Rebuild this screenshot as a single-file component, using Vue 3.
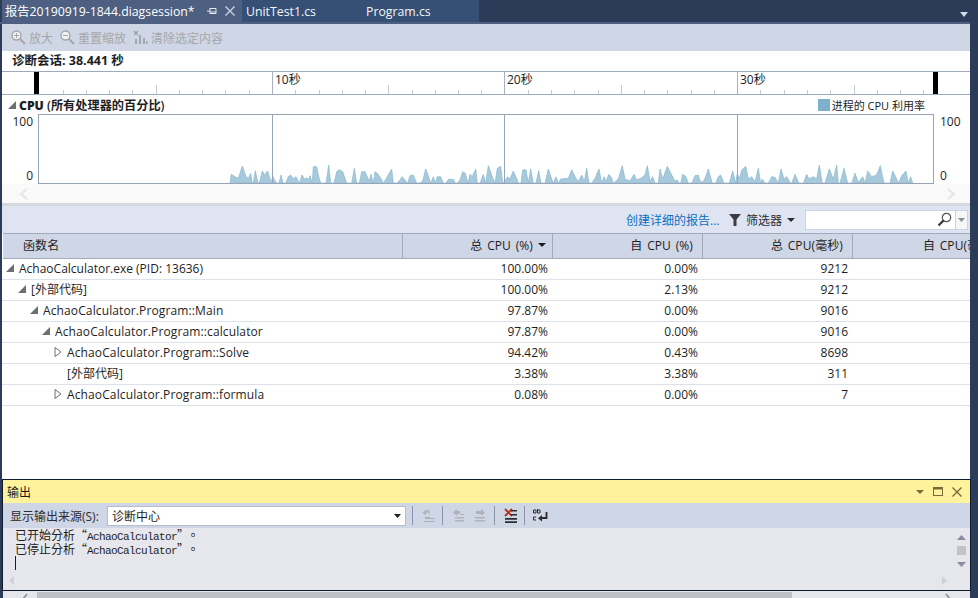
<script setup>
const seg = (off, s) => s.trim().split(/\s+/).map(p => {
  const [x, y] = p.split(',').map(Number)
  return `${(off + x / 3).toFixed(1)},${(155 + y / 3).toFixed(1)}`
}).join(' ')
const a = '30,85 34,58 45,65 55,70 67,33 78,65 85,70 92,55 97,85 100,85 106,47 113,82 118,85 127,48 133,60 143,48 150,72 155,78 158,62 165,78 172,85 177,85 183,60 189,85 197,85 205,65 212,60 220,72 228,65 238,85 246,60 253,72 260,68 265,75 270,62 277,85 280,35 290,35 295,60 302,85 318,85 326,30 332,85 342,85 350,50 358,44 368,50 380,85 395,85 403,40 410,85 418,85 425,50 435,50 447,78 453,58 460,85 465,50 472,55 484,72 490,85 498,72 510,50 515,42 520,85 530,85 537,78 547,65 557,78 563,85 570,62 580,60 590,85 600,85 608,78 617,42 625,62 632,85 640,65 645,85 652,65 662,65 670,85 678,85 685,73 700,73 706,85 712,85'
const b = '0,75 8,50 16,55 24,85 30,58 37,65 47,42 52,85 60,85 70,58 77,85 85,32 95,60 105,85 112,40 122,34 128,85 133,80 143,65 150,72 160,48 172,75 175,85 183,85 188,45 198,44 205,85 212,42 220,85 228,85 236,47 243,85 255,85 265,42 275,72 280,85 288,65 295,85 302,72 325,70 335,44 345,65 355,80 365,60 373,80 380,40 387,85 395,85 405,70 417,42 425,85 432,65 438,78 447,58 455,70 460,85 475,72 487,32 495,72 510,78 522,58 530,75 545,68 555,60 562,32 570,78 578,65 585,85 595,85 600,42 608,72 622,34 635,60 645,78 652,75 658,85 662,85 668,58 678,65 685,85 695,85 705,62 715,60'
const c = '0,78 8,82 15,70 25,42 37,85 47,85 55,65 62,60 72,85 88,85 98,48 107,85 112,55 118,72 125,45 137,34 145,72 155,65 165,80 175,40 182,85 187,72 195,85 205,85 215,65 225,67 235,85 243,42 252,72 260,65 272,85 275,85 285,58 297,85 310,85 320,58 327,72 340,65 350,72 358,30 367,85 375,85 388,42 400,72 410,30 415,85 420,85 432,40 443,85 455,85 465,55 475,82 488,65 495,85 503,48 515,65 525,62 532,55 541,32 552,85 570,85 578,48 590,72 595,85 605,62 618,48 625,85 632,65 638,85'
const chartPoints = `${seg(220, a)} ${seg(460, b)} ${seg(700, c)}`

const ticks = []
for (let i = 1; i < 39; i++) {
  if (i % 10 === 0) continue
  const x = Math.round(39.4 + i * 23.26) + 0.5
  ticks.push({ x, top: i % 5 === 0 ? 14 : 19 })
}
const majors = [272.5, 504.5, 737.5]
const labels = [
  { x: 275, t: '10秒' },
  { x: 507, t: '20秒' },
  { x: 740, t: '30秒' }
]
const rows = [
  { name: 'AchaoCalculator.exe (PID: 13636)', level: 0, icon: 'open', v: ['100.00%', '0.00%', '9212'] },
  { name: '[外部代码]', level: 1, icon: 'open', v: ['100.00%', '2.13%', '9212'] },
  { name: 'AchaoCalculator.Program::Main', level: 2, icon: 'open', v: ['97.87%', '0.00%', '9016'] },
  { name: 'AchaoCalculator.Program::calculator', level: 3, icon: 'open', v: ['97.87%', '0.00%', '9016'] },
  { name: 'AchaoCalculator.Program::Solve', level: 4, icon: 'closed', v: ['94.42%', '0.43%', '8698'] },
  { name: '[外部代码]', level: 4, icon: 'none', v: ['3.38%', '3.38%', '311'] },
  { name: 'AchaoCalculator.Program::formula', level: 4, icon: 'closed', v: ['0.08%', '0.00%', '7'] }
]
</script>

<template>
  <div class="app">
    <div class="tabs">
      <div class="tab active">
        <span class="tab-title">报告20190919-1844.diagsession*</span>
        <svg class="pin" width="10" height="10" viewBox="0 0 10 10"><path d="M0 5h3M3 2v6M3 2.5h6M3 7.5h6M9 2.5v5M3 6h6" fill="none" stroke="#e4e8f0" stroke-width="1"/></svg>
        <svg class="close" width="10" height="10" viewBox="0 0 10 10"><path d="M0.500 0.500l9 9M9.500 0.500l-9 9" stroke="#c9d1e0" stroke-width="1.400"/></svg>
      </div>
      <div class="tab other">UnitTest1.cs</div>
      <div class="tab other">Program.cs</div>
      <div class="tab-fill"></div>
      <svg class="tabs-caret" width="8" height="5" viewBox="0 0 8 5"><path d="M0 0h8L4 5z" fill="#d5dbe8"/></svg>
    </div>
    <div class="tabline"></div>

    <div class="doc">
      <div class="toolbar">
        <svg width="15" height="15" viewBox="0 0 15 15"><circle cx="5.500" cy="5.500" r="4.500" fill="#eef0f4" stroke="#a4a6a8" stroke-width="1.400"/><path d="M9 9l5 5" stroke="#a4a6a8" stroke-width="2"/><path d="M3 5.500h5M5.500 3v5" stroke="#a4a6a8"/></svg>
        <span class="tool-label first">放大</span>
        <svg class="gap-icon" width="15" height="15" viewBox="0 0 15 15"><circle cx="5.500" cy="5.500" r="4.500" fill="#eef0f4" stroke="#a4a6a8" stroke-width="1.400"/><path d="M9 9l5 5" stroke="#a4a6a8" stroke-width="2"/><path d="M3 5.500h5" stroke="#a4a6a8"/></svg>
        <span class="tool-label first">重置缩放</span>
        <svg class="gap-icon" width="15" height="15" viewBox="0 0 15 15"><path d="M1 1l4 4M5 1L1 5" stroke="#9a9c9e" stroke-width="1.200"/><path d="M2 9h2v5H2zM6 5h2v9H6zM10 8h2v6h-2z" fill="#a4a6a8"/><path d="M13 11h1.500v3H13z" fill="#a4a6a8"/></svg>
        <span class="tool-label first">清除选定内容</span>
      </div>

      <div class="session">诊断会话: 38.441 秒</div>

      <svg class="ruler" width="968" height="24" viewBox="2 71 968 24">
        <rect x="2" y="71" width="968" height="1" fill="#a0aabd"/>
        <rect x="2" y="94" width="968" height="1" fill="#a0aabd"/>
        <rect x="34" y="72" width="5" height="22" fill="#000"/>
        <rect x="933" y="72" width="5" height="22" fill="#000"/>
        <path v-for="t in ticks" :key="t.x" :d="`M${t.x} ${71 + t.top}V94`" stroke="#c5cad4" fill="none"/>
        <rect v-for="m in majors" :key="m" :x="m - 0.5" y="72" width="1" height="22" fill="#a8b1c2"/>
        <text v-for="l in labels" :key="l.x" :x="l.x" y="84" class="ruler-label">{{ l.t }}</text>
      </svg>

      <div class="cpu-head">
        <svg width="8" height="8" viewBox="0 0 8 8"><path d="M8 0v8H0z" fill="#6d6f73"/></svg>
        <span class="cpu-title"><b>CPU</b> <b class="semi">(所有处理器的百分比)</b></span>
        <span class="legend"><i class="swatch"></i>进程的 CPU 利用率</span>
      </div>

      <div class="chart-row">
        <div class="axis left"><span>100</span><span>0</span></div>
        <svg class="plot" width="896" height="70" viewBox="38 114 896 70">
          <polygon :points="chartPoints" fill="#a6c9db" stroke="#8ab7ce" stroke-width="0.700"/>
          <path d="M272.500 114V183M504.500 114V183M737.500 114V183" stroke="#97a3b6" fill="none"/>
          <rect x="38.500" y="114.500" width="895" height="69" fill="none" stroke="#97a3b6"/>
        </svg>
        <div class="axis right"><span>100</span><span>0</span></div>
      </div>

      <div class="chart-scroll">
        <svg width="10" height="12" viewBox="0 0 10 12"><path d="M8 1L2 6l6 5" fill="none" stroke="#e8e8e8" stroke-width="2.400"/></svg>
        <svg width="10" height="12" viewBox="0 0 10 12"><path d="M2 1l6 5-6 5" fill="none" stroke="#e8e8e8" stroke-width="2.400"/></svg>
      </div>
      <div class="split"></div>

      <div class="filterbar">
        <a class="link">创建详细的报告...</a>
        <svg class="funnel" width="12" height="12" viewBox="0 0 12 12"><path d="M0 0h12L7.500 5.500V12h-3V5.500z" fill="#3c3c40"/></svg>
        <span class="filter-label">筛选器</span>
        <svg class="caret" width="8" height="4" viewBox="0 0 8 4"><path d="M0 0h8L4 4z" fill="#2d2d30"/></svg>
        <div class="search">
          <span class="search-input"><svg width="15" height="15" viewBox="0 0 15 15"><circle cx="9.500" cy="5.500" r="4.200" fill="none" stroke="#555" stroke-width="1.200"/><path d="M6.500 8.500L1.500 13.500" stroke="#333" stroke-width="2.200"/></svg></span>
          <span class="search-drop"><svg width="7" height="4" viewBox="0 0 7 4"><path d="M0 0h7L3.500 4z" fill="#8a8d94"/></svg></span>
        </div>
      </div>

      <div class="table">
        <div class="thead">
          <div class="th name">函数名</div>
          <div class="th sorted">总 CPU (%)<svg class="sort" width="8" height="4" viewBox="0 0 8 4"><path d="M0 0h8L4 4z" fill="#1e1e1e"/></svg></div>
          <div class="th">自 CPU (%)</div>
          <div class="th">总 CPU(毫秒)</div>
          <div class="th last">自 CPU(毫秒)</div>
        </div>
        <div v-for="(r, i) in rows" :key="i" class="tr">
          <div class="td name" :style="{ paddingLeft: 4 + r.level * 12 + 'px' }">
            <svg class="exp" width="8" height="12" viewBox="0 0 8 12">
              <path v-if="r.icon === 'open'" d="M8 2v8H0z" fill="#6d6f73"/>
              <path v-else-if="r.icon === 'closed'" d="M1 1.500l6 4.500-6 4.500z" fill="none" stroke="#6d6f73"/>
            </svg>
            <span :class="{ method: r.name.includes('::') }">{{ r.name }}</span>
          </div>
          <div v-for="(v, j) in r.v" :key="j" class="td num">{{ v }}</div>
          <div class="td"></div>
        </div>
      </div>
    </div>

    <div class="output">
      <div class="out-title">
        <span>输出</span>
        <span class="out-controls">
          <svg width="8" height="4" viewBox="0 0 8 4"><path d="M0 0h8L4 4z" fill="#7a6a3a"/></svg>
          <svg width="10" height="9" viewBox="0 0 10 9"><rect x="0.500" y="0.500" width="9" height="8" fill="none" stroke="#7a6a3a"/><rect x="0" y="0" width="10" height="2.500" fill="#7a6a3a"/></svg>
          <svg width="10" height="10" viewBox="0 0 10 10"><path d="M0.500 0.500l9 9M9.500 0.500l-9 9" stroke="#7a6a3a" stroke-width="1.400"/></svg>
        </span>
      </div>
      <div class="out-tools">
        <span class="src-label">显示输出来源(S):</span>
        <div class="combo">
          <span>诊断中心</span>
          <svg width="7" height="4" viewBox="0 0 7 4"><path d="M0 0h7L3.500 4z" fill="#1e1e1e"/></svg>
        </div>
        <i class="sep"></i>
        <svg class="ic" width="14" height="15" viewBox="0 0 14 15"><path d="M3 6V3h4v3M1 4l2 2 2-2" fill="none" stroke="#b0b2b8" stroke-width="1.300"/><path d="M3 9h5v2H3zM2 13h11v1H2zM8 10h5v1H8z" fill="#b0b2b8"/></svg>
        <i class="sep s2"></i>
        <svg class="ic" width="13" height="13" viewBox="0 0 13 13"><path d="M5 0L1 3.500 5 7V5h3V2H5zM3 8h9v1.500H3zM3 11h9v1.500H3zM8 5h4v1H8z" fill="#b0b2b8"/></svg>
        <svg class="ic ic4" width="13" height="13" viewBox="0 0 13 13"><path d="M7 0l4 3.500L7 7V5H2V2h5zM1 8h10v1.500H1zM1 11h10v1.500H1z" fill="#b0b2b8"/></svg>
        <i class="sep s3"></i>
        <svg class="ic" width="14" height="15" viewBox="0 0 14 15"><path d="M1 1l7 7M8 1L1 8" stroke="#b5301a" stroke-width="1.800"/><path d="M7 2h6v1.500H7zM7 6h6v1.500H7zM1 10h12v1.800H1zM1 13.200h12V15H1z" fill="#2d2d30"/></svg>
        <i class="sep s4"></i>
        <svg class="ic" width="15" height="14" viewBox="0 0 15 14"><path d="M13.500 3V9H7" fill="none" stroke="#2d2d30" stroke-width="1.800"/><path d="M9 6L5 9.200 9 12.500z" fill="#2d2d30"/><path d="M0.500 1h2.500v3H0.500zM4.500 0v4h2.500V1H4.500M0.500 8h2.500M0.500 8v3h2.500" fill="none" stroke="#2d2d30"/></svg>
      </div>
      <div class="out-body">
        <div class="out-main">
          <div class="out-text">
            <div class="line"><span class="cjk">已开始分析“</span>AchaoCalculator<span class="cjk tail">”。</span></div>
            <div class="line"><span class="cjk">已停止分析“</span>AchaoCalculator<span class="cjk tail">”。</span></div>
            <i class="cursor"></i>
          </div>
          <div class="hscroll">
            <svg width="5" height="9" viewBox="0 0 5 9"><path d="M5 0v9L0 4.500z" fill="#d0d1d8"/></svg>
            <svg width="5" height="9" viewBox="0 0 5 9"><path d="M0 0v9l5-4.500z" fill="#d0d1d8"/></svg>
          </div>
        </div>
        <div class="vscroll">
          <svg width="9" height="5" viewBox="0 0 9 5"><path d="M4.500 0L9 5H0z" fill="#8a8ca0"/></svg>
          <i class="thumb"></i>
          <svg width="9" height="5" viewBox="0 0 9 5"><path d="M0 0h9L4.500 5z" fill="#8a8ca0"/></svg>
        </div>
      </div>
    </div>

    <div class="bottom">
      <svg width="6" height="7" viewBox="0 0 6 7"><path d="M5 1L1 6" fill="none" stroke="#8a8ca0" stroke-width="1.600"/></svg>
      <i class="bottom-thumb"></i>
      <svg class="bottom-next" width="6" height="7" viewBox="0 0 6 7"><path d="M1 1l4 5" fill="none" stroke="#8a8ca0" stroke-width="1.600"/></svg>
    </div>
  </div>
</template>

<style>
html, body { margin: 0; overflow: hidden; }
</style>

<style scoped>
.app {
  width: 978px;
  height: 598px;
  overflow: hidden;
  display: flex;
  flex-direction: column;
  background: #2b3b58;
  color: #1e1e1e;
  font-family: "Open Sans", "Noto Sans CJK SC", sans-serif;
  font-size: 12px;
}
.tabs { height: 22px; display: flex; align-items: stretch; padding-left: 2px; flex: none; }
.tab { display: flex; align-items: center; font-size: 12.300px; }
.tab.active { width: 240px; padding-left: 3px; box-sizing: border-box; background: #4d6082; color: #fff; }
.tab-title { width: 202px; white-space: nowrap; flex: none; overflow: hidden; }
.pin { margin-right: 8px; flex: none; }
.close { flex: none; }
.tab.other { width: 120px; padding-left: 4px; box-sizing: border-box; background: #364f75; color: #f2f5fa; }
.tab.other + .tab.other { width: 117px; }
.tab-fill { flex: 1; }
.tabs-caret { align-self: center; margin-right: 10px; margin-top: 6px; }
.tabline { height: 2px; background: #4d6082; flex: none; margin-right: 8px; }

.doc {
  margin: 0 8px 0 2px;
  height: 455px;
  flex: none;
  background: #fff;
  overflow: hidden;
}
.toolbar {
  height: 27px;
  background: #cfd6e5;
  display: flex;
  align-items: center;
  padding-left: 9px;
  color: #a4a6a8;
}
.tool-label { margin-left: 2px; }
.tool-label.first { margin-left: 3px; }
.gap-icon { margin-left: 7px; }
.session { height: 20px; line-height: 19px; padding-left: 10px; font-weight: 700; font-size: 12.500px; white-space: nowrap; }
.ruler { display: block; }
.ruler-label { font-size: 12px; fill: #1e1e1e; }
.cpu-head { height: 19px; display: flex; align-items: center; padding-left: 6px; padding-right: 45px; }
.cpu-title { margin-left: 3px; font-weight: 700; white-space: nowrap; font-size: 12.200px; }
.semi { font-weight: 600; }
.legend { margin-left: auto; display: flex; align-items: center; white-space: nowrap; font-size: 11px; }
.swatch { width: 12px; height: 12px; background: #7cb0cb; margin-right: 2px; }
.chart-row { display: grid; grid-template-columns: 36px 896px 1fr; height: 70px; }
.plot { display: block; }
.axis { display: flex; flex-direction: column; justify-content: space-between; height: 70px; line-height: 14px; font-size: 12px; }
.axis.left { align-items: flex-end; padding-right: 5px; }
.axis.right { align-items: flex-start; padding-left: 6px; }
.axis span:first-child { margin-top: 1px; }
.axis span:last-child { margin-bottom: 1px; }
.chart-scroll {
  height: 19px;
  background: #fafafa;
  display: flex;
  align-items: center;
  justify-content: space-between;
  padding: 0 14px 0 17px;
}
.split { height: 3px; background: #d6d8de; }
.filterbar { height: 27px; background: #dee4f1; display: flex; align-items: center; padding-left: 624px; box-sizing: border-box; }
.link { color: #0e70c0; white-space: nowrap; width: 103px; flex: none; }
.funnel { flex: none; }
.filter-label { margin-left: 5px; width: 36px; white-space: nowrap; flex: none; color: #2d2d30; }
.caret { margin-left: 5px; flex: none; }
.search { margin-left: 10px; display: flex; height: 20px; flex: none; }
.search-input { width: 150px; background: #fff; border: 1px solid #ccd3e2; border-right: 0; box-sizing: border-box; display: flex; align-items: center; justify-content: flex-end; padding-right: 3px; }
.search-drop { width: 13px; background: #f6f6f6; border: 1px solid #ccd3e2; box-sizing: border-box; display: flex; align-items: center; justify-content: center; }

.table { overflow: hidden; }
.thead { display: grid; grid-template-columns: 400px 150px 150px 150px 150px; height: 24px; margin-left: 1px; background: #cfd6e5; border-top: 1px solid #a0aabd; border-bottom: 1px solid #a0aabd; width: 1000px; }
.th { display: flex; align-items: center; justify-content: flex-end; padding-right: 9px; border-right: 1px solid #a0aabd; white-space: nowrap; word-spacing: 1.500px; letter-spacing: 0.100px; padding-bottom: 2px; }
.th.name { justify-content: flex-start; padding-left: 20px; }
.th.sorted { padding-right: 6px; }
.th.last { padding-right: 7px; }
.sort { margin-left: 5px; }
.tr { display: grid; grid-template-columns: 401px 150px 150px 150px 150px; height: 20px; border-bottom: 1px solid #dde1ea; width: 1000px; }
.td { display: flex; align-items: center; white-space: nowrap; padding-bottom: 2px; box-sizing: border-box; }
.td.name { gap: 5px; }
.method { letter-spacing: 0.120px; }
.exp { flex: none; }
.td.num { justify-content: flex-end; padding-right: 5px; }

.output {
  margin: 0 7px 0 2px;
  height: 110px;
  flex: none;
  border: 1px solid #0f1c2e;
  display: flex;
  flex-direction: column;
  background: #e6e7ec;
}
.out-title { height: 23px; flex: none; background: #fff29d; display: flex; align-items: center; justify-content: space-between; padding: 0 8px 0 4px; }
.out-controls { display: flex; align-items: center; gap: 9px; }
.out-tools { height: 25px; flex: none; background: #cfd6e5; display: flex; align-items: center; padding-left: 7px; }
.src-label { color: #2d2d30; width: 97px; flex: none; white-space: nowrap; }
.combo { width: 299px; height: 20px; background: #fff; border: 1px solid #b4bccd; box-sizing: border-box; display: flex; align-items: center; justify-content: space-between; padding: 0 4px; flex: none; }
.sep { width: 1px; height: 19px; background: #8a93a5; margin-left: 6px; margin-right: 9px; flex: none; }
.s3 { margin-left: 7px; }
.s4 { margin-right: 8px; }
.ic { flex: none; }
.ic4 { margin-left: 9px; }
.out-body { flex: 1; display: flex; min-height: 0; }
.out-main { flex: 1; display: flex; flex-direction: column; min-width: 0; }
.out-text { flex: 1; padding-left: 12px; font-family: "Liberation Mono", "Noto Sans CJK TC", monospace; font-size: 11px; letter-spacing: -0.600px; }
.line { height: 14px; line-height: 14px; white-space: nowrap; }
.cjk { font-size: 12px; letter-spacing: 0; font-family: "Noto Sans CJK TC", sans-serif; }
.tail { letter-spacing: 4px; }
.cursor { display: block; width: 1px; height: 14px; background: #1e1e1e; }
.hscroll { height: 17px; padding: 0 6px 3px 6px; box-sizing: border-box; flex: none; display: flex; justify-content: space-between; align-items: center; }
.vscroll { width: 17px; flex: none; display: flex; flex-direction: column; align-items: center; padding-top: 7px; box-sizing: border-box; }
.thumb { width: 9px; height: 9px; background: #c2c3c9; margin: 6px 0 7px; }
.bottom { flex: 1; min-height: 0; background: #e6e7ec; margin: 0 8px 0 3px; display: flex; align-items: flex-start; padding: 1px 0 0 19px; }
.bottom svg { flex: none; margin-top: 1px; }
.bottom-thumb { display: block; width: 755px; height: 100%; background: #bfc0c6; margin-left: 9px; }
.bottom-next { margin-left: 153px; }
</style>
